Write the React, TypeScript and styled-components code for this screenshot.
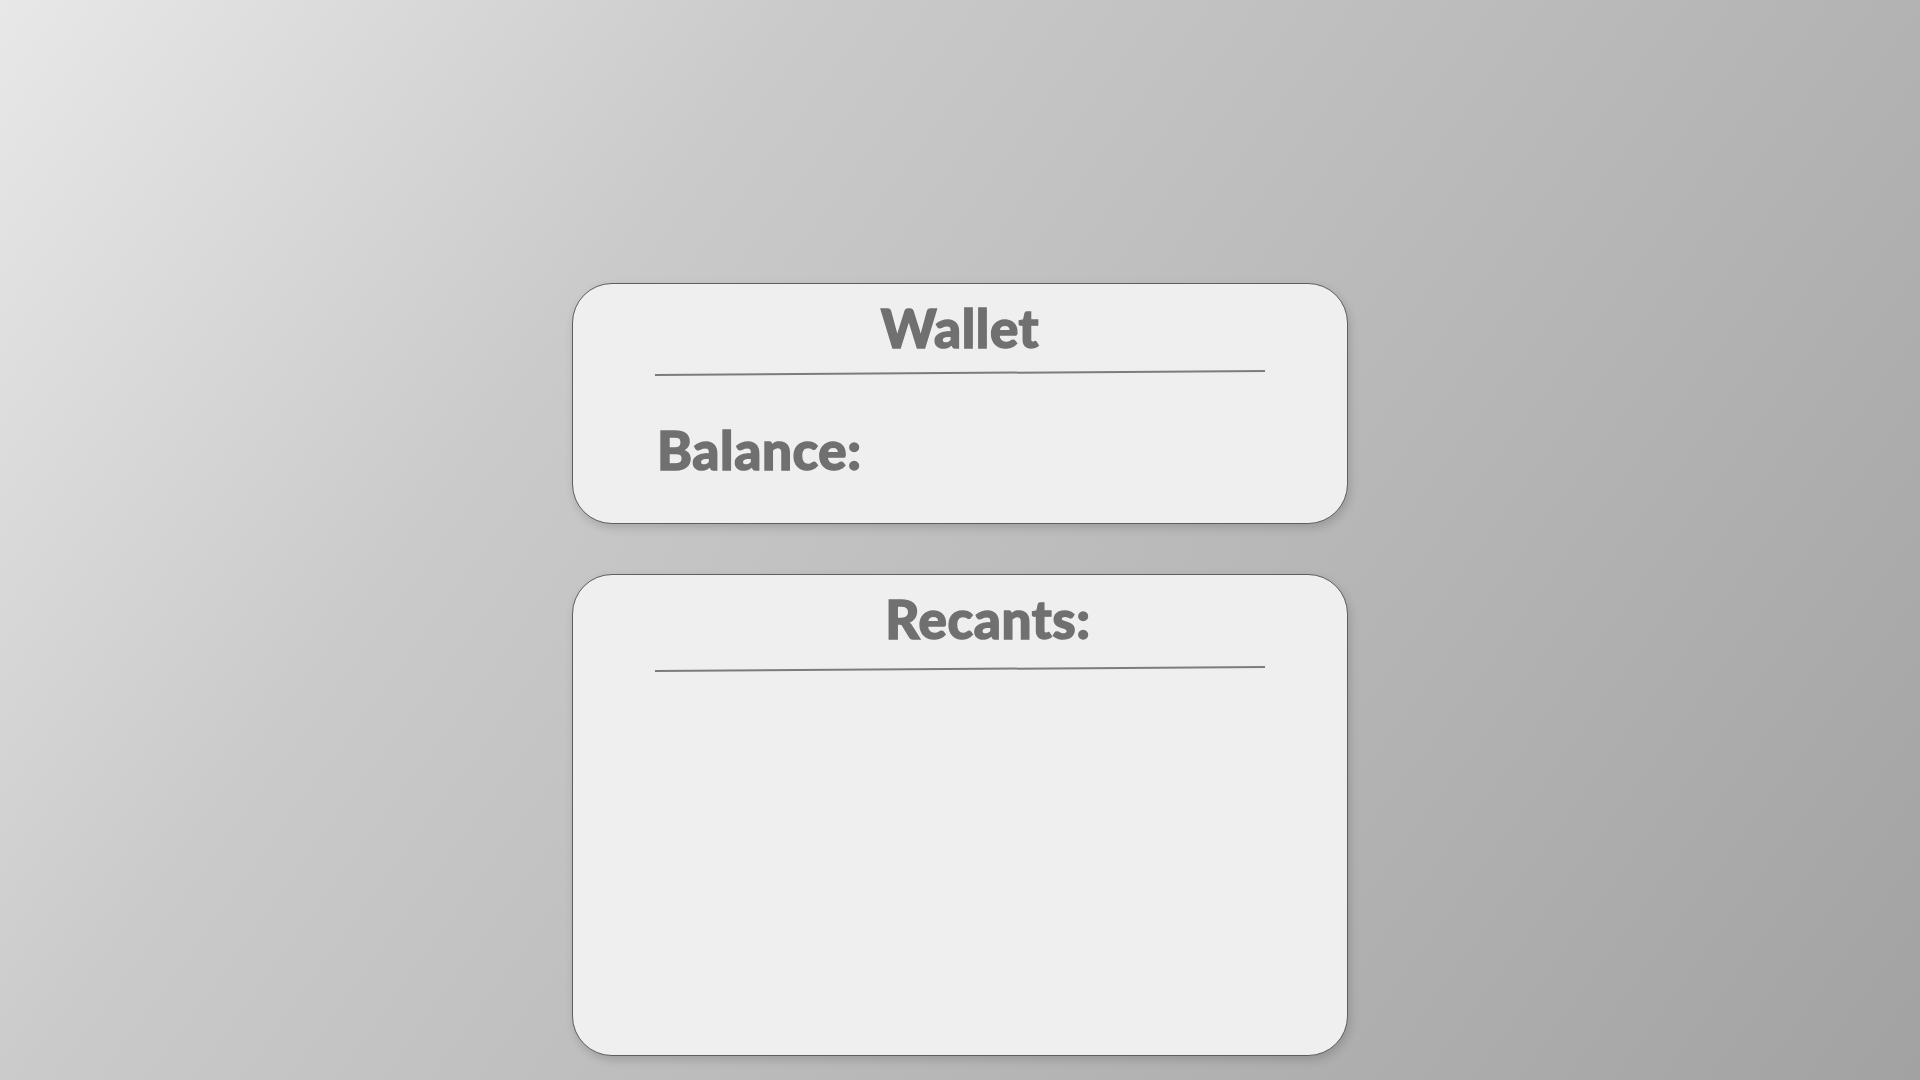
import React, { FC } from 'react';
import styled, { createGlobalStyle } from 'styled-components';

const GlobalStyle = createGlobalStyle`
    html, body {
        margin: 0;
        padding: 0;
        height: 100%;
    }
    body {
        font-family: Lato, 'Open Sans', sans-serif;
        background: linear-gradient(126deg, #e8e8e8 0%, #cacaca 30%, #a2a2a2 100%);
        background-attachment: fixed;
        min-height: 1080px;
        overflow: hidden;
    }
`;

const PageWrapper = styled.div`
    display: flex;
    flex-direction: column;
    align-items: center;
    gap: 50px;
    padding-top: 283px;
    box-sizing: border-box;
    min-height: 1080px;
`;

const Card = styled.section<{ $height: number }>`
    width: 776px;
    height: ${p => p.$height}px;
    box-sizing: border-box;
    padding-top: 12px;
    background: #efefef;
    border: 1px solid #5e5e5e;
    border-radius: 40px;
    box-shadow: 2px 4px 10px rgba(0, 0, 0, 0.16);
    display: flex;
    flex-direction: column;
`;

const Title = styled.h2<{ $shift?: number }>`
    margin: 0;
    padding-left: ${p => (p.$shift ?? 0) * 2}px;
    font-size: 53px;
    line-height: 64px;
    font-weight: 900;
    letter-spacing: 0.6px;
    -webkit-text-stroke: 1.4px #707070;
    color: #707070;
    text-align: center;
`;

const Divider = styled.div<{ $top: number }>`
    align-self: center;
    width: 610px;
    height: 1.5px;
    margin-top: ${p => p.$top}px;
    background: #7c7c7c;
    transform: rotate(-0.38deg);
`;

const Label = styled.div`
    margin: 44px 0 0 84px;
    font-size: 53px;
    line-height: 64px;
    font-weight: 900;
    letter-spacing: 0.6px;
    -webkit-text-stroke: 1.4px #707070;
    color: #707070;
`;

const WalletCard: FC = () => (
    <Card $height={241}>
        <Title>Wallet</Title>
        <Divider $top={12} />
        <Label>Balance:</Label>
    </Card>
);

const RecentsCard: FC = () => (
    <Card $height={482}>
        <Title $shift={28}>Recants:</Title>
        <Divider $top={17} />
    </Card>
);

export default function App() {
    return (
        <>
            <GlobalStyle />
            <PageWrapper>
                <WalletCard />
                <RecentsCard />
            </PageWrapper>
        </>
    );
}
